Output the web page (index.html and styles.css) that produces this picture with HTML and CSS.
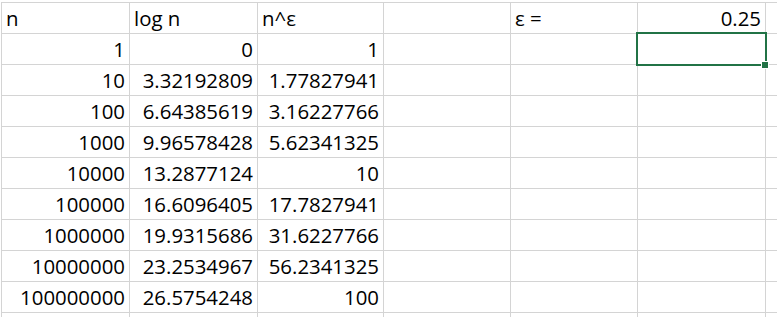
FILE: index.html
```html
<!DOCTYPE html>
<html>
<head>
<meta charset="utf-8">
<link rel="stylesheet" href="styles.css">
</head>
<body>
<div class="sheet">
  <div class="cell">n</div><div class="cell">log n</div><div class="cell">n^ε</div><div class="cell"></div><div class="cell">ε =</div><div class="cell num">0.25</div><div class="cell"></div>
  <div class="cell num">1</div><div class="cell num">0</div><div class="cell num">1</div><div class="cell"></div><div class="cell"></div><div class="cell selected"><div class="sel"><div class="handle"></div></div></div><div class="cell"></div>
  <div class="cell num">10</div><div class="cell num">3.32192809</div><div class="cell num">1.77827941</div><div class="cell"></div><div class="cell"></div><div class="cell"></div><div class="cell"></div>
  <div class="cell num">100</div><div class="cell num">6.64385619</div><div class="cell num">3.16227766</div><div class="cell"></div><div class="cell"></div><div class="cell"></div><div class="cell"></div>
  <div class="cell num">1000</div><div class="cell num">9.96578428</div><div class="cell num">5.62341325</div><div class="cell"></div><div class="cell"></div><div class="cell"></div><div class="cell"></div>
  <div class="cell num">10000</div><div class="cell num">13.2877124</div><div class="cell num">10</div><div class="cell"></div><div class="cell"></div><div class="cell"></div><div class="cell"></div>
  <div class="cell num">100000</div><div class="cell num">16.6096405</div><div class="cell num">17.7827941</div><div class="cell"></div><div class="cell"></div><div class="cell"></div><div class="cell"></div>
  <div class="cell num">1000000</div><div class="cell num">19.9315686</div><div class="cell num">31.6227766</div><div class="cell"></div><div class="cell"></div><div class="cell"></div><div class="cell"></div>
  <div class="cell num">10000000</div><div class="cell num">23.2534967</div><div class="cell num">56.2341325</div><div class="cell"></div><div class="cell"></div><div class="cell"></div><div class="cell"></div>
  <div class="cell num">100000000</div><div class="cell num">26.5754248</div><div class="cell num">100</div><div class="cell"></div><div class="cell"></div><div class="cell"></div><div class="cell"></div>
  <div class="cell"></div><div class="cell"></div><div class="cell"></div><div class="cell"></div><div class="cell"></div><div class="cell"></div><div class="cell"></div>
</div>
</body>
</html>
```

FILE: styles.css
```css
html, body {
  margin: 0;
  padding: 0;
  background: #ffffff;
  overflow: hidden;
}
.sheet {
  margin: 2px 0 0 1px;
  display: grid;
  grid-template-columns: 128px 128px 126px 127px 127px 128px 40px;
  grid-auto-rows: 31px;
  border-top: 1px solid #d4d4d4;
  border-left: 1px solid #d4d4d4;
  font-family: "Open Sans", "Liberation Sans", sans-serif;
  font-size: 20.4px;
  color: #000;
  width: max-content;
}
.cell {
  box-sizing: border-box;
  border-right: 1px solid #d4d4d4;
  border-bottom: 1px solid #d4d4d4;
  line-height: 30px;
  padding: 0 4px 0 4px;
  white-space: nowrap;
  overflow: visible;
}
.num {
  text-align: right;
}
.selected {
  position: relative;
}
.sel {
  position: absolute;
  left: -2px;
  top: -2px;
  right: -2px;
  bottom: -2px;
  border: 2px solid #217346;
}
.handle {
  position: absolute;
  right: -4px;
  bottom: -5px;
  width: 6px;
  height: 6px;
  background: #217346;
  border: 1px solid #ffffff;
  box-sizing: content-box;
}
```
